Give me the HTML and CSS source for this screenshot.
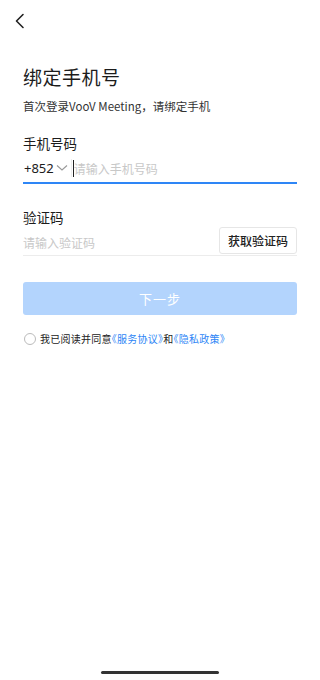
FILE: index.html
```html
<!DOCTYPE html>
<html lang="zh-CN">
<head>
  <meta charset="UTF-8" />
  <meta name="viewport" content="width=device-width, initial-scale=1.0"/>
  <title>绑定手机号</title>
  <link rel="stylesheet" href="styles.css">
</head>
<body>
  <div class="page">
    <div class="nav">
      <svg class="back" width="12" height="16" viewBox="0 0 12 16"><path d="M9 1.5 L2.5 8 L9 14.5" fill="none" stroke="#222" stroke-width="1.6" stroke-linecap="round" stroke-linejoin="round"/></svg>
    </div>

    <h1>绑定手机号</h1>
    <p class="sub">首次登录VooV Meeting，请绑定手机</p>

    <div class="field">
      <div class="label">手机号码</div>
      <div class="row row-active">
        <span class="code">+852</span>
        <svg class="chev" width="12" height="8" viewBox="0 0 12 8"><path d="M1 1.5 L6 6 L11 1.5" fill="none" stroke="#999" stroke-width="1.1"/></svg>
        <span class="sep"></span>
        <span class="caret"></span>
        <span class="ph">请输入手机号码</span>
      </div>
    </div>

    <div class="field field-code">
      <div class="label">验证码</div>
      <div class="row">
        <span class="ph ph-code">请输入验证码</span>
        <button class="get">获取验证码</button>
      </div>
    </div>

    <button class="next">下一步</button>

    <div class="agree">
      <span class="radio"></span>
      <span class="agree-text">我已阅读并同意<a>《服务协议》</a>和<a>《隐私政策》</a></span>
    </div>
  </div>
  <div class="home"></div>
</body>
</html>
```

FILE: styles.css
```css
* {
  box-sizing: border-box;
  font-family: "Noto Sans CJK SC", "Noto Sans", sans-serif;
}

body {
  margin: 0;
  background: #fff;
  width: 320px;
  height: 680px;
  position: relative;
  overflow: hidden;
  color: #1c1c1c;
}

.page {
  padding: 0 23px;
}

.nav {
  height: 42px;
  display: flex;
  align-items: center;
  margin-left: -9px;
}

h1 {
  margin: 22px 0 0;
  font-size: 19px;
  font-weight: 400;
  line-height: 26px;
  letter-spacing: 0.5px;
}

.sub {
  margin: 8px 0 0;
  font-size: 11.5px;
  line-height: 16px;
  color: #333;
}

.field {
  margin-top: 20px;
}

.label {
  font-size: 13.5px;
  line-height: 18px;
}

.row {
  display: flex;
  align-items: center;
  border-bottom: 1px solid #ececec;
}

.row-active {
  height: 32px;
  padding-top: 2px;
  border-bottom: 2px solid #2e86f6;
}

.code {
  font-family: "Noto Sans", sans-serif;
  font-size: 13px;
  margin-left: 1px;
}

.chev {
  margin-left: 2px;
}

.sep {
  width: 1px;
  height: 18px;
  background: #eee;
  margin-left: 3px;
}

.caret {
  width: 1px;
  height: 17px;
  background: #222;
  margin-left: 1px;
}

.ph {
  font-size: 12px;
  color: #c8c8c8;
}

.field-code {
  margin-top: 24px;
}

.field-code .row {
  height: 30px;
  align-items: flex-end;
  padding-bottom: 1px;
}

.ph-code {
  flex: 1;
  align-self: center;
  padding-top: 4px;
}

.get {
  height: 27px;
  padding: 0 8px;
  background: #fff;
  border: 1px solid #e6e6e6;
  border-radius: 3px;
  font-size: 12px;
  font-weight: 500;
  color: #222;
}

.next {
  display: block;
  width: 100%;
  height: 33px;
  margin-top: 26px;
  background: #b3d4fd;
  border: none;
  border-radius: 3px;
  color: #fff;
  font-size: 13px;
  letter-spacing: 1px;
}

.agree {
  margin-top: 16px;
  display: flex;
  align-items: center;
  font-size: 10px;
  color: #222;
}

.radio {
  flex: none;
  width: 12px;
  height: 12px;
  border: 1px solid #bbb;
  border-radius: 50%;
  margin-left: 1px;
  margin-right: 4px;
}

.agree-text {
  white-space: nowrap;
  font-feature-settings: "halt";
  letter-spacing: 0.25px;
}

.agree a {
  color: #2e86f6;
}

.home {
  position: absolute;
  left: 101px;
  bottom: 6px;
  width: 118px;
  height: 3px;
  border-radius: 2px;
  background: #333;
}
```
